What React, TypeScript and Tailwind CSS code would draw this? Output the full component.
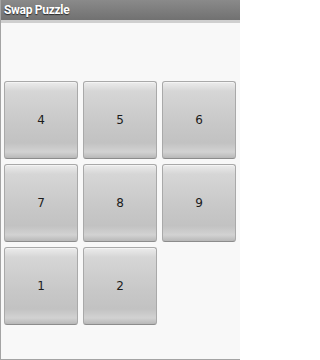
const tiles: (number | null)[] = [4, 5, 6, 7, 8, 9, 1, 2, null];

function Tile({ value }: { value: number }) {
  return (
    <button className="h-[78px] w-[74px] rounded-[3px] border border-[#a9a9a9] border-b-[#8c8c8c] bg-[linear-gradient(to_bottom,#ececec_0%,#d6d6d6_12%,#c8c8c8_55%,#c2c2c2_80%,#d2d2d2_92%,#b8b8b8_100%)] shadow-[inset_0_1px_0_#f4f4f4] flex items-center justify-center text-[12px] text-[#1c1c1c] font-['DejaVu_Sans',sans-serif]">
      {value}
    </button>
  );
}

export default function App() {
  return (
    <div className="w-[240px] h-[360px] flex flex-col bg-[#f8f8f8] border-l border-b border-[#a4a4a4] font-['DejaVu_Sans',sans-serif]">
      <div className="h-[23px] flex items-center pl-[3px] bg-[linear-gradient(to_bottom,#8a8a8a,#717171)] border-b-[3px] border-[#cfcfcf]">
        <span className="text-[12px] font-bold text-white [text-shadow:0_1px_1px_#2a2a2a] font-['Roboto',sans-serif] tracking-[-0.3px]">
          Swap Puzzle
        </span>
      </div>
      <div className="grid grid-cols-[repeat(3,74px)] gap-[5px] pt-[58px] pl-[3px]">
        {tiles.map((t, i) =>
          t === null ? <div key={i} /> : <Tile key={i} value={t} />
        )}
      </div>
    </div>
  );
}
